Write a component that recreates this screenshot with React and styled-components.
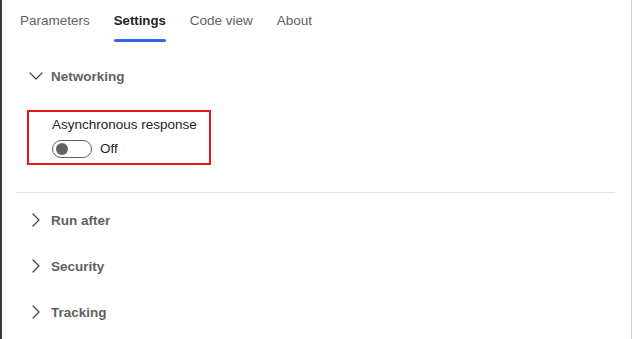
import React from "react";
import styled, { createGlobalStyle } from "styled-components";
import { ChevronDown, ChevronRight } from "lucide-react";

const Global = createGlobalStyle`
  html, body { margin: 0; padding: 0; background: #ffffff; }
  body { font-family: "Segoe UI", "Liberation Sans", Arial, sans-serif; }
  * { box-sizing: border-box; }
`;

const Frame = styled.div`
  width: 632px;
  height: 339px;
  border-left: 2px solid #3a3a3a;
  border-right: 1px solid #d1d1d1;
  background: #ffffff;
  overflow: hidden;
  font-size: 13.5px;
  color: #242424;
`;

const TabList = styled.div`
  display: flex;
  gap: 24px;
  padding-left: 18px;
  height: 44px;
`;

const Tab = styled.div`
  position: relative;
  height: 44px;
  padding-top: 11px;
  line-height: 20px;
  font-weight: ${(p) => (p.$active ? 700 : 400)};
  font-size: ${(p) => (p.$active ? "13.2px" : "13.5px")};
  color: ${(p) => (p.$active ? "#242424" : "#616161")};
  &::after {
    content: "";
    display: ${(p) => (p.$active ? "block" : "none")};
    position: absolute;
    left: 0;
    right: 0;
    bottom: 2px;
    height: 3px;
    border-radius: 2px;
    background: #3068ec;
  }
`;

const Body = styled.div`
  padding: 10px 16px 0 14px;
`;

const SectionHeader = styled.div`
  display: flex;
  align-items: center;
  gap: 3px;
  height: 44px;
  padding-left: 8px;
  font-weight: 700;
  color: #616161;
  svg { flex: none; }
`;

const Highlight = styled.div`
  margin: 12px 0 0 11px;
  width: 184px;
  height: 55px;
  border: 2px solid #e8141c;
  padding: 3px 0 0 23px;
`;

const FieldLabel = styled.div`
  line-height: 20px;
  color: #242424;
`;

const SwitchRow = styled.div`
  display: flex;
  align-items: center;
  gap: 8px;
  margin-top: 4px;
  height: 20px;
`;

const SwitchTrack = styled.div`
  width: 40px;
  height: 18px;
  border: 1px solid #616161;
  border-radius: 10px;
  display: flex;
  align-items: center;
  padding-left: 3px;
`;

const SwitchKnob = styled.div`
  width: 12px;
  height: 12px;
  border-radius: 50%;
  background: #616161;
`;

const SwitchText = styled.span`
  line-height: 20px;
  color: #242424;
`;

const Divider = styled.hr`
  margin: 27px 0 4px 0;
  border: none;
  border-top: 1px solid #e0e0e0;
  height: 0;
`;

const CollapsedHeader = styled(SectionHeader)`
  height: 46px;
`;

const tabs = ["Parameters", "Settings", "Code view", "About"];
const collapsed = ["Run after", "Security", "Tracking"];

export default function App() {
  return (
    <>
      <Global />
      <Frame>
        <TabList>
          {tabs.map((t) => (
            <Tab key={t} $active={t === "Settings"}>
              {t}
            </Tab>
          ))}
        </TabList>
        <Body>
          <SectionHeader>
            <ChevronDown size={24} strokeWidth={1.2} color="#424242" />
            Networking
          </SectionHeader>
          <Highlight>
            <FieldLabel>Asynchronous response</FieldLabel>
            <SwitchRow>
              <SwitchTrack>
                <SwitchKnob />
              </SwitchTrack>
              <SwitchText>Off</SwitchText>
            </SwitchRow>
          </Highlight>
          <Divider />
          {collapsed.map((c) => (
            <CollapsedHeader key={c}>
              <ChevronRight size={24} strokeWidth={1.2} color="#424242" />
              {c}
            </CollapsedHeader>
          ))}
        </Body>
      </Frame>
    </>
  );
}
